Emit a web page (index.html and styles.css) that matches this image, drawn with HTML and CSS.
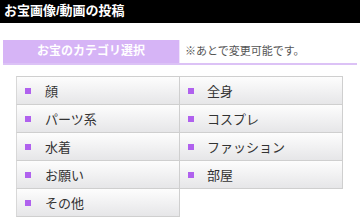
FILE: index.html
```html
<!DOCTYPE html>
<html lang="ja">
<head>
    <meta charset="UTF-8">
    <title>お宝画像/動画の投稿</title>
    <link rel="stylesheet" href="styles.css">
</head>
<body>
    <div class="page-title">お宝画像/動画の投稿</div>

    <div class="category-head">
        <div class="category-label">お宝のカテゴリ選択</div>
        <div class="category-note">※あとで変更可能です。</div>
    </div>

    <ul class="category-list">
        <li><span class="bullet"></span>顔</li>
        <li><span class="bullet"></span>全身</li>
        <li><span class="bullet"></span>パーツ系</li>
        <li><span class="bullet"></span>コスプレ</li>
        <li><span class="bullet"></span>水着</li>
        <li><span class="bullet"></span>ファッション</li>
        <li><span class="bullet"></span>お願い</li>
        <li><span class="bullet"></span>部屋</li>
        <li><span class="bullet"></span>その他</li>
    </ul>
</body>
</html>
```

FILE: styles.css
```css
* {
    margin: 0;
    padding: 0;
    box-sizing: border-box;
}

body {
    background-color: #ffffff;
    color: #333;
    font-family: "Liberation Sans", "Noto Sans CJK JP", sans-serif;
}

.page-title {
    height: 23px;
    background-color: #000;
    color: #fff;
    font-size: 13px;
    font-weight: 700;
    line-height: 22px;
    padding-left: 4px;
}

.category-head {
    display: flex;
    margin: 17px 3px 0 3px;
    height: 25px;
    border-bottom: 2px solid #dcc2f6;
}

.category-label {
    width: 176px;
    background-color: #d6b4f6;
    color: #fff;
    font-size: 12px;
    font-weight: 700;
    text-align: center;
    line-height: 23px;
}

.category-note {
    flex: 1;
    padding-left: 5px;
    font-size: 11px;
    line-height: 22px;
    color: #555;
    border-left: 1px solid #efe4fb;
}

.category-list {
    list-style: none;
    display: grid;
    grid-template-columns: 164px 163px;
    margin: 11px 0 0 16px;
    width: 327px;
}

.category-list li {
    display: flex;
    align-items: center;
    height: 28px;
    padding-left: 8px;
    font-size: 13px;
    color: #333;
    background: linear-gradient(#fdfdfd, #e6e6e8);
    border-right: 1px solid #cfcfcf;
    border-bottom: 1px solid #cfcfcf;
}

.category-list li:nth-child(odd) {
    border-left: 1px solid #d8d8d8;
}

.category-list li:nth-child(-n+2) {
    border-top: 1px solid #cfcfcf;
    height: 29px;
}

.category-list li:nth-child(odd) .bullet {
    margin-right: 14px;
}

.bullet {
    width: 6px;
    height: 6px;
    background-color: #b061ee;
    margin-right: 13px;
}
```
